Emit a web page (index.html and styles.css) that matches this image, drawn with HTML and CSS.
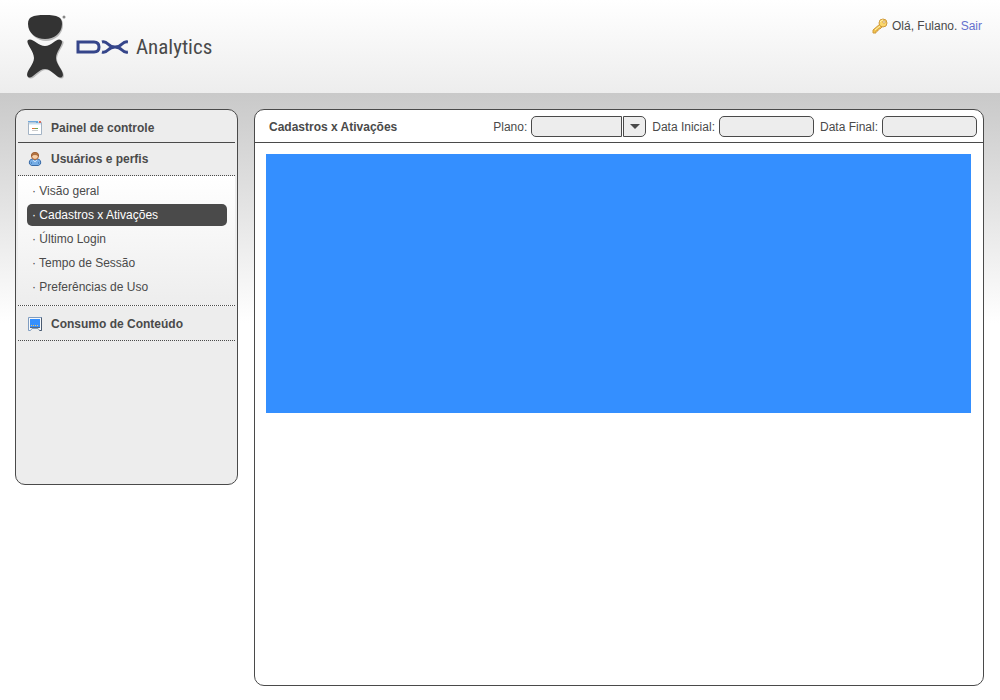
FILE: index.html
```html
<!DOCTYPE html>
<html lang="pt-BR">
<head>
<meta charset="utf-8">
<title>DX Analytics</title>
<meta name="viewport" content="width=device-width, initial-scale=1">
<link rel="stylesheet" href="styles.css">
</head>
<body>
<header class="header">
  <div class="brand">
    <svg class="brand-figure" viewBox="0 0 42 66" aria-hidden="true">
      <path class="figure-shadow" d="M3 11C3 4 7 2 20 2S37 4 37 11C37 20 29 27 20 27S3 20 3 11Z"/>
      <path class="figure-shadow" d="M3 27C7 24 13 33 20 33S32 24 37 27C40 30 31 38 31 45C31 52 41 60 37 64C33 67 27 56 20 56S8 67 3 64C-1 60 9 52 9 45C9 38 0 30 3 27Z"/>
      <path class="figure-body" d="M2 10C2 3 6 1 19 1S36 3 36 10C36 19 28 25 19 25S2 19 2 10Z"/>
      <path class="figure-body" d="M2 26C6 23 12 32 19 32S31 23 35 26C39 29 30 37 30 44C30 51 40 59 36 63C32 66 26 55 19 55S6 66 2 63C-2 59 8 51 8 44C8 37 -1 29 2 26Z"/>
      <circle class="figure-mark" cx="38" cy="3" r="1.500"/>
    </svg>
    <svg class="brand-dx" viewBox="0 0 52 14" role="img" aria-label="DX">
      <path d="M2 2H18Q23 2 23 7T18 12H2Z"/>
      <path d="M26 2Q29 1 32 4Q35 7 39 7T46 4Q49 1 52 2M26 12Q29 13 32 10Q35 7 39 7T46 10Q49 13 52 12"/>
    </svg>
    <span class="brand-name">Analytics</span>
  </div>
  <div class="user">
    <svg class="key" viewBox="0 0 16 16" aria-hidden="true">
      <path d="M8 6L1 12V15H4V13H6V11H8L10 9" fill="#f2c44d" stroke="#d09a3c"/>
      <circle cx="11" cy="5" r="4" fill="#fbd76b" stroke="#d09a3c"/>
      <path d="M3 12L8 8M8 4Q9 2 11 2" fill="none" stroke="#fff2b0"/>
      <circle cx="12" cy="4" r="1.200" fill="#fff" stroke="#b87c28" stroke-width=".6"/>
    </svg>
    <span>Olá, Fulano. <a class="logout" href="#">Sair</a></span>
  </div>
</header>
<div class="page">
  <nav class="sidebar" aria-label="Menu principal">
    <a class="section section-first" href="#">
      <svg class="icon" viewBox="0 0 16 16" aria-hidden="true">
        <path d="M1.500 2.500H14.500V14.500H1.500Z" fill="#fff" stroke="#a3b3c4"/>
        <path d="M2 3.500H14" stroke="#c9dff0" stroke-width="2"/>
        <path d="M1 1.500H9" stroke="#6fa8dc"/>
        <path d="M9 2H11" stroke="#67a9dd" stroke-width="2"/>
        <path d="M12 2H14" stroke="#d66e60" stroke-width="2"/>
        <path d="M5 8.500H8" stroke="#e0703a"/><path d="M8 8.500H11" stroke="#66aa55"/>
        <path d="M5 10.500H11" stroke="#ccc"/>
      </svg>
      Painel de controle
    </a>
    <a class="section section-open" href="#">
      <svg class="icon" viewBox="0 0 16 16" aria-hidden="true">
        <path d="M2.500 13Q1.500 8.500 5.500 8H10.500Q14.500 8.500 13.500 13L11.500 14.500H4.500Z" fill="#77aee6" stroke="#396ba7"/>
        <path d="M6 9L8 11L10 9" fill="none" stroke="#c5dff8"/>
        <path d="M4.500 11V13M11.500 11V13" fill="none" stroke="#5089c6"/>
        <circle cx="8" cy="5" r="3.500" fill="#f8d0a8" stroke="#a65e31"/>
        <path d="M4.500 5Q4 1.500 8 1.500T11.500 5Q10 3.500 8 3.500T4.500 5Z" fill="#b77641" stroke="#92552d" stroke-width=".6"/>
      </svg>
      Usuários e perfis
    </a>
    <ul class="submenu">
      <li><a class="item" href="#">· Visão geral</a></li>
      <li><a class="item item-active" href="#" aria-current="page">· Cadastros x Ativações</a></li>
      <li><a class="item" href="#">· Último Login</a></li>
      <li><a class="item" href="#">· Tempo de Sessão</a></li>
      <li><a class="item" href="#">· Preferências de Uso</a></li>
    </ul>
    <a class="section section-closed" href="#">
      <svg class="icon" viewBox="0 0 16 16" aria-hidden="true">
        <path d="M1.500 1.500H14.500V14.500H12.500L11 12.500H5L3.500 14.500H1.500Z" fill="#f5f8fb" stroke="#7f9cc0"/>
        <path d="M14.500 1.500V14.500H12.500" fill="none" stroke="#4a5a70"/>
        <path d="M3 3H13V11H3Z" fill="#348fff"/>
        <path d="M4 9.500H12" stroke="#f4c765" stroke-dasharray="1 1"/>
        <path d="M3 11.500H13" stroke="#526887"/>
      </svg>
      Consumo de Conteúdo
    </a>
  </nav>
  <main class="panel">
    <div class="panel-head">
      <h1 class="panel-title">Cadastros x Ativações</h1>
      <form class="filters">
        <div class="field">
          <label for="plano">Plano:</label>
          <span class="combo">
            <span class="combo-value"></span>
            <span class="combo-button"><svg class="arrow" viewBox="0 0 10 5" aria-hidden="true"><path d="M0 0H10L5 5Z"/></svg></span>
            <select class="combo-select" id="plano"><option></option></select>
          </span>
        </div>
        <div class="field"><label for="inicial">Data Inicial:</label><input class="date" type="text" id="inicial"></div>
        <div class="field"><label for="final">Data Final:</label><input class="date" type="text" id="final"></div>
      </form>
    </div>
    <div class="chart"></div>
  </main>
</div>
</body>
</html>
```
FILE: styles.css
```css
* { box-sizing: border-box; }

body {
  margin: 0;
  min-height: 100vh;
  background: #fff;
  color: #4a4a4a;
  font: 12px/16px "Liberation Sans", Arial, sans-serif;
}

a { color: inherit; text-decoration: none; }

.header {
  display: flex;
  justify-content: space-between;
  align-items: flex-start;
  min-height: 93px;
  padding: 14px 18px 12px 26px;
  background: linear-gradient(#fff, #ededed);
}
.brand { display: flex; align-items: center; }
.brand-figure { width: 42px; height: 66px; }
.figure-shadow { fill: #bbb; }
.figure-body { fill: #333; }
.figure-mark { fill: #888; }
.brand-dx {
  width: 52px;
  height: 14px;
  margin: 0 8px;
  fill: none;
  stroke: #35458a;
  stroke-width: 3;
}
.brand-name {
  color: #4a4a4a;
  font: 21px/28px "Liberation Sans Narrow", "Arial Narrow", "Roboto Condensed", "Liberation Sans", sans-serif;
}
.user { display: flex; align-items: center; gap: 4px; padding-top: 4px; }
.key { width: 16px; height: 16px; }
.logout { color: #6571ce; }

.page {
  display: flex;
  align-items: flex-start;
  gap: 16px;
  padding: 16px 16px 14px 15px;
  background: linear-gradient(#c9c9c9, #fff 230px);
}

.sidebar {
  flex: 0 0 223px;
  min-height: 376px;
  padding: 0 2px;
  border: 1px solid #4a4a4a;
  border-radius: 10px;
  background: #ededed;
}
.section {
  display: flex;
  align-items: center;
  gap: 8px;
  padding: 8px 9px;
  font-weight: bold;
  border-bottom: 1px dotted #4a4a4a;
}
.section-first { padding-top: 10px; padding-bottom: 6px; border-bottom-style: solid; }
.section-closed { padding-top: 10px; }
.icon { width: 16px; height: 16px; }
.submenu {
  display: flex;
  flex-direction: column;
  gap: 2px;
  margin: 0;
  padding: 4px 8px 7px 9px;
  list-style: none;
  background: linear-gradient(#fff, #ededed);
  border-bottom: 1px dotted #4a4a4a;
}
.item { display: block; padding: 3px 5px; border-radius: 5px; }
.item-active { background: #4a4a4a; color: #fff; }

.panel {
  flex: 1;
  min-width: 0;
  min-height: 577px;
  border: 1px solid #4a4a4a;
  border-radius: 10px;
  background: #fff;
}
.panel-head {
  display: flex;
  justify-content: space-between;
  align-items: center;
  padding: 6px 6px 5px 14px;
  border-bottom: 1px solid #4a4a4a;
}
.panel-title { margin: 0; font-size: 12px; line-height: 16px; }
.filters { display: flex; gap: 6px; }
.field { display: flex; align-items: center; gap: 4px; }
.date {
  width: 95px;
  height: 21px;
  padding: 0 6px;
  border: 1px solid #4a4a4a;
  border-radius: 5px;
  background: #ededed;
  color: inherit;
  font: inherit;
}
.combo { position: relative; display: flex; gap: 1px; height: 21px; }
.combo-value, .combo-button { border: 1px solid #4a4a4a; background: #ededed; }
.combo-value { width: 91px; border-radius: 5px 0 0 5px; }
.combo-button {
  display: flex;
  align-items: center;
  justify-content: center;
  width: 23px;
  border-radius: 0 5px 5px 0;
}
.arrow { width: 10px; height: 5px; fill: #4a4a4a; }
.combo-select {
  position: absolute;
  inset: 0;
  width: 100%;
  padding: 0 28px 0 6px;
  border: 0;
  appearance: none;
  background: transparent;
  color: inherit;
  font: inherit;
}
.chart { height: 259px; margin: 11px 12px 0 11px; background: #348fff; }
```
